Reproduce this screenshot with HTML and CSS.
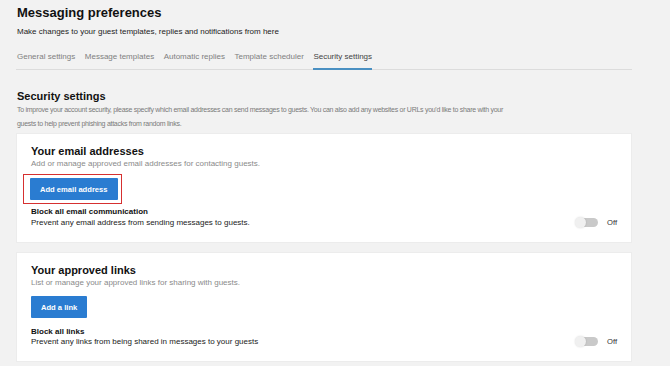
FILE: index.html
```html
<!DOCTYPE html>
<html lang="en">
<head>
  <meta charset="UTF-8" />
  <title>Messaging preferences</title>
  <link rel="stylesheet" href="styles.css">
</head>
<body>
  <div class="page">
    <header class="page-head">
      <h1>Messaging preferences</h1>
      <p class="lead">Make changes to your guest templates, replies and notifications from here</p>
    </header>

    <nav class="tabs">
      <a class="tab">General settings</a>
      <a class="tab">Message templates</a>
      <a class="tab">Automatic replies</a>
      <a class="tab">Template scheduler</a>
      <a class="tab active">Security settings</a>
    </nav>

    <section class="security">
      <h2>Security settings</h2>
      <p class="intro">To improve your account security, please specify which email addresses can send messages to guests. You can also add any websites or URLs you'd like to share with your guests to help prevent phishing attacks from random links.</p>

      <div class="card">
        <h3>Your email addresses</h3>
        <p class="hint">Add or manage approved email addresses for contacting guests.</p>
        <div class="highlight">
          <button class="btn">Add email address</button>
        </div>
        <div class="setting">
          <div class="setting-text">
            <strong>Block all email communication</strong>
            <span>Prevent any email address from sending messages to guests.</span>
          </div>
          <label class="toggle"><span class="switch"></span>Off</label>
        </div>
      </div>

      <div class="card">
        <h3>Your approved links</h3>
        <p class="hint">List or manage your approved links for sharing with guests.</p>
        <div class="plain">
          <button class="btn">Add a link</button>
        </div>
        <div class="setting">
          <div class="setting-text">
            <strong>Block all links</strong>
            <span>Prevent any links from being shared in messages to your guests</span>
          </div>
          <label class="toggle"><span class="switch"></span>Off</label>
        </div>
      </div>
    </section>
  </div>
</body>
</html>
```

FILE: styles.css
```css
* {
  box-sizing: border-box;
}

body {
  margin: 0;
  background: #f2f2f2;
  font-family: "Liberation Sans", Arial, sans-serif;
  color: #1c1c1c;
}

.page {
  width: 616px;
  margin-left: 16px;
  padding-top: 4px;
}

h1 {
  margin: 0 0 0 1px;
  font-size: 13px;
  font-weight: 700;
  line-height: 18px;
  color: #111;
}

.lead {
  margin: 5px 0 0 1px;
  font-size: 8px;
  line-height: 10px;
  color: #222;
}

.tabs {
  display: flex;
  gap: 9.5px;
  margin-top: 10px;
  border-bottom: 1px solid #dcdcdc;
  padding-left: 1px;
}

.tab {
  font-size: 8px;
  line-height: 10px;
  color: #808080;
  padding: 5px 0 6px;
  border-bottom: 2px solid transparent;
  margin-bottom: -1px;
}

.tab.active {
  color: #444;
  border-bottom-color: #4a90c2;
}

.security {
  padding-top: 19px;
}

h2 {
  margin: 0 0 0 1px;
  font-size: 11px;
  line-height: 14px;
  font-weight: 700;
  color: #111;
}

.intro {
  margin: 0 0 0 1px;
  font-size: 7px;
  letter-spacing: -0.28px;
  line-height: 14px;
  color: #7a7a7a;
  max-width: 490px;
}

.card {
  background: #fff;
  border: 1px solid #ececec;
  margin-top: 2px;
  padding: 10px 14px 14px;
}

.card + .card {
  margin-top: 9px;
}

h3 {
  margin: 0;
  font-size: 11px;
  line-height: 14px;
  font-weight: 700;
  color: #111;
}

.hint {
  margin: 1px 0 0;
  font-size: 8px;
  line-height: 10px;
  color: #8a8a8a;
}

.highlight {
  display: inline-flex;
  margin: 5px 0 0 -8px;
  border: 1px solid #d63030;
  padding: 3px 3px 3px 6px;
}

.plain {
  display: flex;
  margin-top: 8px;
}

.btn {
  background: #2a7cd1;
  color: #fff;
  border: none;
  border-radius: 1px;
  font-family: inherit;
  font-size: 7.6px;
  font-weight: 700;
  height: 22px;
  padding: 0 10px;
}

.setting {
  display: flex;
  align-items: flex-end;
  justify-content: space-between;
  margin-top: 2px;
}

.card + .card .setting {
  margin-top: 9px;
}

.card + .card .setting-text {
  line-height: 10px;
}

.setting-text {
  display: flex;
  flex-direction: column;
  font-size: 8px;
  line-height: 11px;
  color: #222;
}

.setting-text strong {
  color: #111;
}

.toggle {
  display: flex;
  align-items: center;
  gap: 9px;
  font-size: 7.6px;
  color: #333;
  padding-bottom: 1px;
}

.switch {
  position: relative;
  width: 22px;
  height: 9px;
  border-radius: 5px;
  background: #c9c9c9;
}

.switch::before {
  content: "";
  position: absolute;
  left: -1px;
  top: -1px;
  width: 11px;
  height: 11px;
  border-radius: 50%;
  background: #f0f0f0;
  box-shadow: 0 0 2px rgba(0, 0, 0, 0.15);
}
```
